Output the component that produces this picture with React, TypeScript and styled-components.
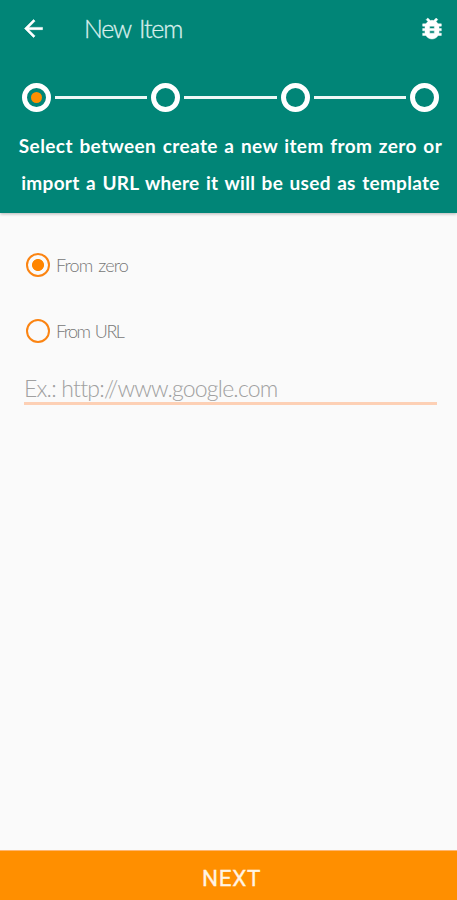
import React, { useState } from 'react';
import styled, { createGlobalStyle } from 'styled-components';

const GlobalStyle = createGlobalStyle`
  *, *::before, *::after { box-sizing: border-box; }
  body { margin: 0; background: #fafafa; font-family: Lato, sans-serif; }
`;

const Screen = styled.main`
  display: flex;
  flex-direction: column;
  height: 100vh;
  overflow: hidden;
`;

const Header = styled.header`
  height: 213px;
  flex: none;
  background: #018577;
  color: #fff;
  box-shadow: 0 1px 3px rgba(0, 0, 0, 0.28);
`;

const Toolbar = styled.div`
  display: flex;
  align-items: center;
  height: 57px;
  padding: 0 11px 0 20px;
`;

const IconButton = styled.button`
  display: flex;
  padding: 0;
  border: 0;
  background: none;
  color: inherit;
`;

const Title = styled.h1`
  flex: 1;
  margin: -2px 0 0 37px;
  color: #d9efec;
  font-size: 25px;
  font-weight: 300;
  line-height: 30px;
  letter-spacing: -1.2px;
  word-spacing: 3px;
  -webkit-text-stroke: 0.3px #d9efec;
`;

const Stepper = styled.div`
  display: flex;
  align-items: center;
  padding: 26px 18px 0 22px;
`;

const Step = styled.span`
  display: grid;
  place-items: center;
  flex: none;
  width: 29px;
  height: 29px;
  border: 5px solid #fff;
  border-radius: 50%;
`;

const StepDot = styled.span`
  width: 11px;
  height: 11px;
  border-radius: 50%;
  background: #ff8f00;
`;

const Connector = styled.span`
  flex: 1;
  height: 3px;
  margin: 0 4px;
  background: #eef8f6;
`;

const Description = styled.p`
  margin: 16px 0 0;
  padding-left: 4px;
  font-size: 19px;
  font-weight: 700;
  line-height: 36.5px;
  text-align: center;
  white-space: nowrap;
`;

const Line = styled.span<{ $tracking: number }>`
  display: block;
  letter-spacing: ${({ $tracking }) => $tracking}px;
  word-spacing: 1.5px;
`;

const Form = styled.section`
  flex: 1;
  padding: 40px 20px 0 24px;
`;

const Option = styled.label`
  display: flex;
  align-items: center;
  height: 24px;
  margin-bottom: 42px;
  padding-left: 2px;
`;

const Radio = styled.input`
  appearance: none;
  flex: none;
  width: 24px;
  height: 24px;
  margin: 0 6px 0 0;
  border: 2px solid #fb8412;
  border-radius: 50%;
  &:checked { background: radial-gradient(circle, #ff8500 5.6px, transparent 6.4px); }
`;

const OptionText = styled.span<{ $tracking: number }>`
  color: #777;
  font-size: 18px;
  font-weight: 300;
  line-height: 24px;
  letter-spacing: ${({ $tracking }) => $tracking}px;
  word-spacing: 2px;
`;

const UrlInput = styled.input`
  display: block;
  width: 413px;
  height: 37px;
  margin-top: -17px;
  padding: 5px 0 0;
  border: 0;
  border-bottom: 3px solid #fdd0b5;
  outline: 0;
  background: none;
  color: #777;
  font: 300 23px Lato, sans-serif;
  letter-spacing: -0.78px;
  &::placeholder { color: #a0a0a0; opacity: 1; }
`;

const NextButton = styled.button`
  flex: none;
  height: 50px;
  padding: 4px 0 0 6px;
  border: 0;
  border-top: 1px solid #ffb670;
  background: #ff8f00;
  color: #fff4e4;
  font: 400 22.5px Roboto, sans-serif;
  letter-spacing: 0.7px;
  -webkit-text-stroke: 0.3px #fff4e4;
`;

const BackIcon = () => (
  <svg width="27" height="27" viewBox="0 0 24 24" fill="currentColor">
    <path d="M20 11H7.83l5.59-5.59L12 4l-8 8 8 8 1.41-1.41L7.83 13H20v-2z" stroke="currentColor" strokeWidth=".5" />
  </svg>
);

const BugIcon = () => (
  <svg width="28" height="29" viewBox="0 0 24 24" fill="currentColor">
    <path d="M20 8h-2.81a5.985 5.985 0 0 0-1.82-1.96L17 4.41 15.59 3l-2.17 2.17a6.002 6.002 0 0 0-2.83 0L8.41 3 7 4.41l1.62 1.63C7.88 6.55 7.26 7.22 6.81 8H4v2h2.09c-.05.33-.09.66-.09 1v1H4v2h2v1c0 .34.04.67.09 1H4v2h2.81c1.04 1.79 2.97 3 5.19 3s4.15-1.21 5.19-3H20v-2h-2.09c.05-.33.09-.66.09-1v-1h2v-2h-2v-1c0-.34-.04-.67-.09-1H20V8zm-6 8h-4v-2h4v2zm0-4h-4v-2h4v2z" stroke="currentColor" strokeWidth=".4" />
  </svg>
);

const STEPS = [0, 1, 2, 3];
const CURRENT_STEP = 0;

export default function App() {
  const [source, setSource] = useState('zero');
  return (
    <Screen>
      <GlobalStyle />
      <Header>
        <Toolbar>
          <IconButton aria-label="Back"><BackIcon /></IconButton>
          <Title>New Item</Title>
          <IconButton aria-label="Report bug"><BugIcon /></IconButton>
        </Toolbar>
        <Stepper>
          {STEPS.map((step) => (
            <React.Fragment key={step}>
              {step > 0 && <Connector />}
              <Step>{step === CURRENT_STEP && <StepDot />}</Step>
            </React.Fragment>
          ))}
        </Stepper>
        <Description>
          <Line $tracking={0.4}>Select between create a new item from zero or</Line>
          <Line $tracking={0.3}>import a URL where it will be used as template</Line>
        </Description>
      </Header>
      <Form>
        <Option>
          <Radio type="radio" name="source" checked={source === 'zero'} onChange={() => setSource('zero')} />
          <OptionText $tracking={-0.85}>From zero</OptionText>
        </Option>
        <Option>
          <Radio type="radio" name="source" checked={source === 'url'} onChange={() => setSource('url')} />
          <OptionText $tracking={-1.55}>From URL</OptionText>
        </Option>
        <UrlInput placeholder="Ex.: http://www.google.com" />
      </Form>
      <NextButton>NEXT</NextButton>
    </Screen>
  );
}
